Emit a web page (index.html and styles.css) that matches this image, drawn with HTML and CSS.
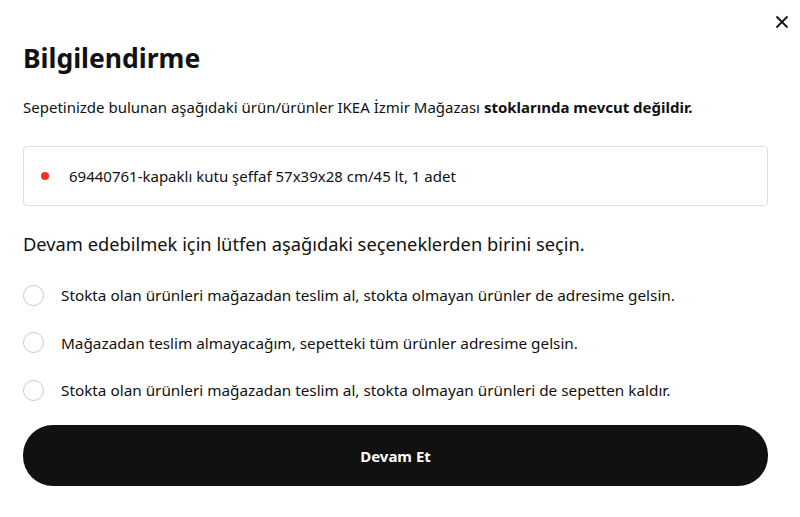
FILE: index.html
```html
<!DOCTYPE html>
<html lang="tr">
<head>
<meta charset="utf-8">
<link rel="stylesheet" href="styles.css">
</head>
<body>
<div class="modal">
  <button class="close" aria-label="Kapat">
    <svg width="14" height="14" viewBox="0 0 14 14"><path d="M1.5 1.5L12.5 12.5M12.5 1.5L1.5 12.5" stroke="#111" stroke-width="1.8" fill="none"/></svg>
  </button>
  <h1 class="title">Bilgilendirme</h1>
  <p class="lead">Sepetinizde bulunan aşağıdaki ürün/ürünler IKEA İzmir Mağazası <strong>stoklarında mevcut değildir.</strong></p>
  <div class="items">
    <div class="item"><span class="dot"></span>69440761-kapaklı kutu şeffaf 57x39x28 cm/45 lt, 1 adet</div>
  </div>
  <p class="prompt">Devam edebilmek için lütfen aşağıdaki seçeneklerden birini seçin.</p>
  <div class="options">
    <label class="option"><span class="radio"></span>Stokta olan ürünleri mağazadan teslim al, stokta olmayan ürünler de adresime gelsin.</label>
    <label class="option"><span class="radio"></span>Mağazadan teslim almayacağım, sepetteki tüm ürünler adresime gelsin.</label>
    <label class="option"><span class="radio"></span>Stokta olan ürünleri mağazadan teslim al, stokta olmayan ürünleri de sepetten kaldır.</label>
  </div>
  <button class="primary">Devam Et</button>
</div>
</body>
</html>
```
FILE: styles.css
```css
* { box-sizing: border-box; }
html, body { margin: 0; padding: 0; background: #fff; }
body { font-family: "Noto Sans", "Open Sans", sans-serif; color: #111; width: 800px; height: 517px; overflow: hidden; }
.modal { position: relative; padding: 0 32px 0 23px; }
.close { position: absolute; top: 15px; right: 11px; width: 14px; height: 14px; padding: 0; border: 0; background: none; display: flex; }
.title { margin: 0; padding-top: 40px; font-size: 26.5px; font-weight: 700; line-height: 36px; }
.lead { margin: 20px 0 0; font-size: 15px; line-height: 22px; }
.lead strong { font-weight: 700; }
.items { margin-top: 28px; border: 1px solid #dfdfdf; border-radius: 4px; height: 60px; display: flex; align-items: center; padding-left: 17px; }
.item { display: flex; align-items: center; font-size: 15px; line-height: 22px; }
.dot { width: 8px; height: 8px; border-radius: 50%; background: #f0321e; margin-right: 20px; }
.prompt { margin: 25px 0 0; font-size: 18.3px; line-height: 26px; }
.options { margin-top: 27px; display: flex; flex-direction: column; gap: 25.5px; }
.option { display: flex; align-items: center; font-size: 15.3px; line-height: 22px; }
.radio { width: 21px; height: 21px; border: 1px solid #c8c8c8; border-radius: 50%; margin-right: 17px; flex: none; }
.primary { margin-top: 24px; width: 745px; height: 61px; border: 0; border-radius: 30px; background: #111; color: #fff; font-family: inherit; font-weight: 700; font-size: 15px; }
```
